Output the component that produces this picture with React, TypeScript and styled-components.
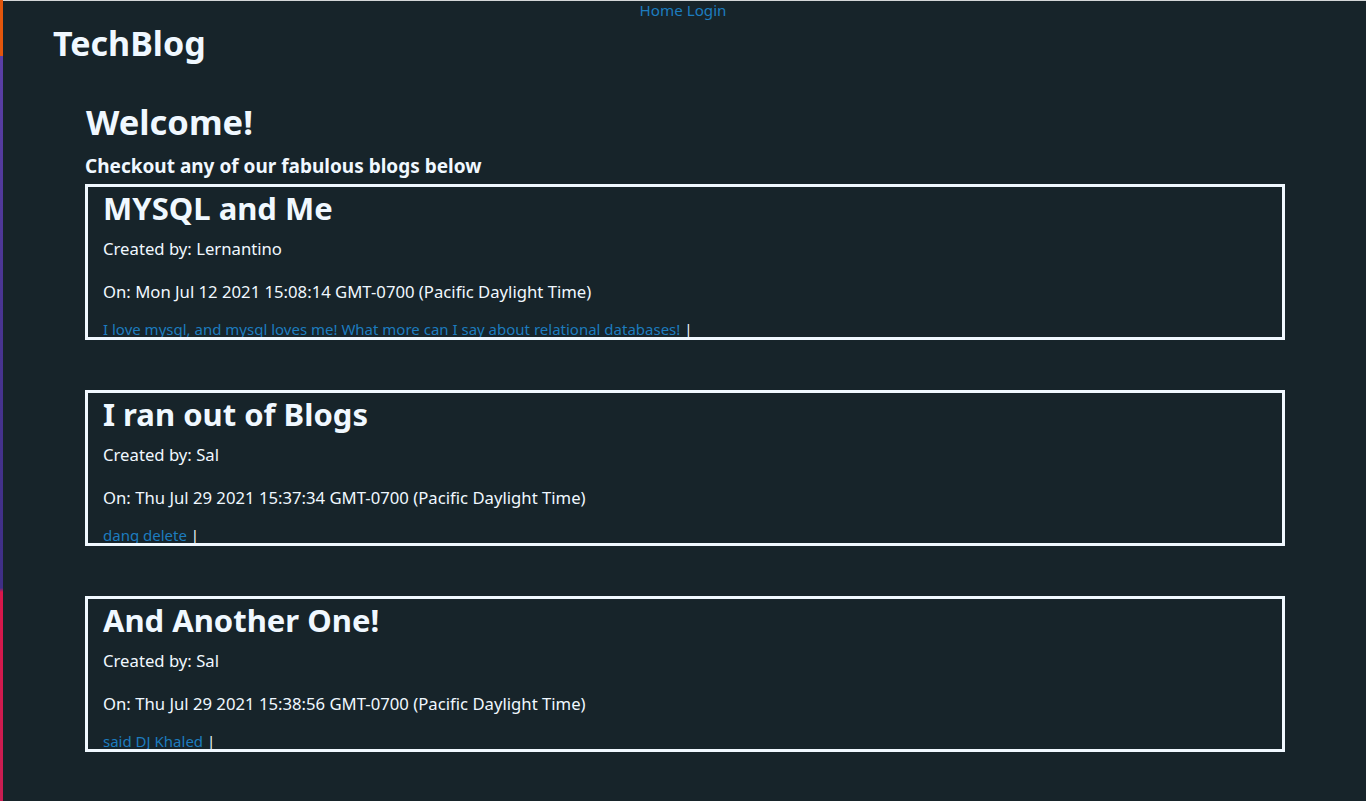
import React from "react";
import styled, { createGlobalStyle } from "styled-components";

const Global = createGlobalStyle`
  html, body { margin: 0; padding: 0; background: #17242a; }
  body { font-family: "Noto Sans", "Open Sans", sans-serif; color: #f0f8ff; }
`;

const Page = styled.div`
  min-height: 801px;
  box-sizing: border-box;
  border-top: 1px solid #d4d7d8;
  background: #17242a;
  position: relative;
`;

const EdgeStrip = styled.div`
  position: fixed;
  left: 0;
  top: 0;
  width: 3px;
  height: 100vh;
  background: linear-gradient(
    to bottom,
    #e2560c 0,
    #e2560c 56px,
    #5b3fa6 56px,
    #4a3592 300px,
    #3f2f86 588px,
    #d8174a 592px,
    #c81e52 801px
  );
`;

const Nav = styled.nav`
  text-align: center;
  font-size: 15.2px;
  line-height: 18px;
  height: 18px;
  padding-bottom: 2px;
`;

const NavLink = styled.a`
  color: #1d7cbf;
  text-decoration: none;
`;

const SiteTitle = styled.h1`
  margin: 0 0 0 53px;
  font-size: 34px;
  line-height: 44px;
  font-weight: 700;
`;

const Main = styled.main`
  margin-left: 85px;
  width: 1200px;
  padding-top: 35px;
`;

const Welcome = styled.h1`
  margin: 0 0 0 1px;
  font-size: 34.5px;
  line-height: 44px;
  font-weight: 700;
`;

const Sub = styled.h3`
  margin: 8px 0 4px;
  font-size: 19px;
  line-height: 28px;
  font-weight: 700;
`;

const Card = styled.article`
  box-sizing: border-box;
  height: 156px;
  border: 3px solid #f0f8ff;
  padding: 0 15px;
  margin-bottom: 50px;
  overflow: hidden;
`;

const PostTitle = styled.h2`
  margin: 0 0 8px;
  font-size: 31px;
  line-height: 42px;
  font-weight: 700;
`;

const Meta = styled.p`
  margin: 0 0 19px;
  font-size: 16.7px;
  line-height: 24px;
`;

const Body = styled.div`
  font-size: 15px;
  line-height: 20px;
  margin-top: -4px;
`;

const BodyLink = styled.a`
  color: #1d7cbf;
  text-decoration: none;
`;

const posts = [
  {
    title: "MYSQL and Me",
    author: "Lernantino",
    date: "Mon Jul 12 2021 15:08:14 GMT-0700 (Pacific Daylight Time)",
    body: "I love mysql, and mysql loves me! What more can I say about relational databases!",
  },
  {
    title: "I ran out of Blogs",
    author: "Sal",
    date: "Thu Jul 29 2021 15:37:34 GMT-0700 (Pacific Daylight Time)",
    body: "dang delete",
  },
  {
    title: "And Another One!",
    author: "Sal",
    date: "Thu Jul 29 2021 15:38:56 GMT-0700 (Pacific Daylight Time)",
    body: "said DJ Khaled",
  },
];

export default function App() {
  return (
    <Page>
      <Global />
      <EdgeStrip />
      <Nav>
        <NavLink href="#">Home</NavLink> <NavLink href="#">Login</NavLink>
      </Nav>
      <SiteTitle>TechBlog</SiteTitle>
      <Main>
        <Welcome>Welcome!</Welcome>
        <Sub>Checkout any of our fabulous blogs below</Sub>
        {posts.map((p) => (
          <Card key={p.title}>
            <PostTitle>{p.title}</PostTitle>
            <Meta>Created by: {p.author}</Meta>
            <Meta>On: {p.date}</Meta>
            <Body>
              <BodyLink href="#">{p.body}</BodyLink> |
            </Body>
          </Card>
        ))}
      </Main>
    </Page>
  );
}
